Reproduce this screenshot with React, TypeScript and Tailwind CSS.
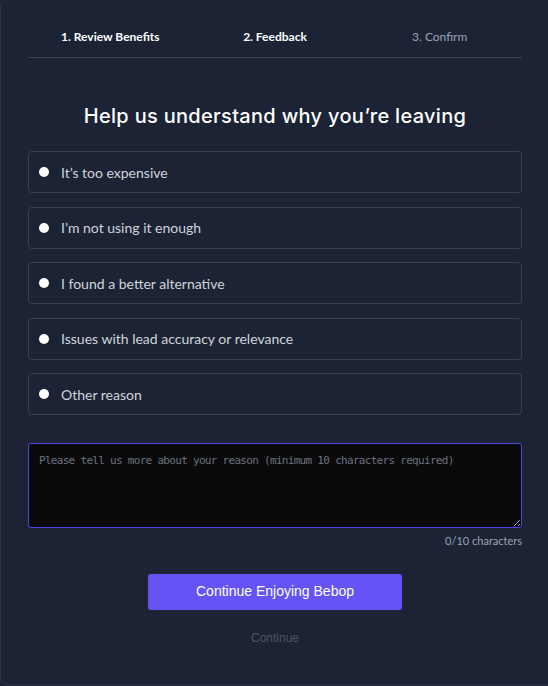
import React from "react";

const reasons = [
  "It\u2019s too expensive",
  "I\u2019m not using it enough",
  "I found a better alternative",
  "Issues with lead accuracy or relevance",
  "Other reason",
];

export default function App() {
  return (
    <div className="w-[548px] h-[686px] bg-[#1b2335] overflow-hidden">
      <div className="h-[685px] w-[560px] rounded-lg border-l border-b border-[#2b3446] bg-[#1b2335] px-[27px] pt-[28px]" style={{ fontFamily: "Lato, 'Noto Sans', sans-serif" }}>
        <div className="w-[494px]">
          <div className="grid grid-cols-3 text-[12px] h-[30px] border-b border-[#374151]">
            <div className="text-center font-bold text-white">1. Review Benefits</div>
            <div className="text-center font-bold text-white">2. Feedback</div>
            <div className="text-center text-[#9ca3af]">3. Confirm</div>
          </div>
          <h1 className="mt-[43px] text-center text-[20px] font-medium text-white tracking-[0.3px]" style={{ fontFamily: "Inter, sans-serif" }}>
            Help us understand why you&rsquo;re leaving
          </h1>
          <div className="mt-[20px] flex flex-col gap-[13.5px]">
            {reasons.map((r) => (
              <label key={r} className="flex h-[42px] items-center gap-[12px] rounded-[4px] border border-[#374151] px-[10px] text-[14px] text-[#d1d5db]">
                <span className="h-[10px] w-[10px] rounded-full bg-white" />
                <span>{r}</span>
              </label>
            ))}
          </div>
          <textarea
            className="mt-[28px] block h-[85px] w-full resize-y rounded-[3px] border border-[#4f46e5] bg-[#0a0a0a] px-[10px] py-[9px] text-white placeholder:text-[#6b7280] outline-none"
            style={{ fontFamily: "'DejaVu Sans Mono', monospace", fontSize: "11px", letterSpacing: "-0.7px" }}
            placeholder="Please tell us more about your reason (minimum 10 characters required)"
          />
          <div className="mt-[5px] text-right text-[11px] text-[#9ca3af]">0/10 characters</div>
          <div className="mt-[24px] flex justify-center">
            <button className="h-[36px] w-[254px] rounded-[3px] bg-[#6454f5] text-[14px] text-white" style={{ fontFamily: "'Liberation Sans', Arial, sans-serif" }}>
              Continue Enjoying Bebop
            </button>
          </div>
          <div className="mt-[19px] text-center text-[12px] text-[#4b5563]" style={{ fontFamily: "'Liberation Sans', Arial, sans-serif" }}>
            Continue
          </div>
        </div>
      </div>
    </div>
  );
}
